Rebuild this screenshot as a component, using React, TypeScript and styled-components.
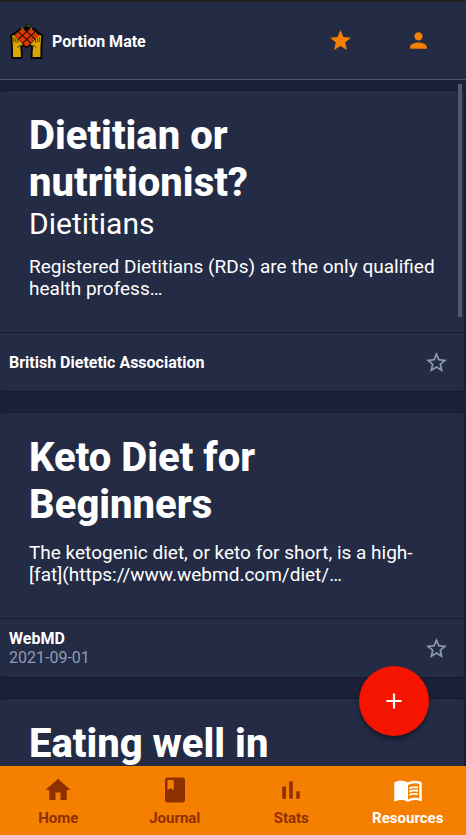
import React from "react";
import styled, { createGlobalStyle } from "styled-components";
import {
  MdAdd,
  MdBook,
  MdHome,
  MdMenuBook,
  MdPerson,
  MdStar,
  MdStarBorder,
} from "react-icons/md";

const color = {
  page: "#1c2039",
  surface: "#242b45",
  edge: "#151a30",
  rule: "#4b5269",
  text: "#ffffff",
  hint: "#8f9bb3",
  accent: "#f57f00",
  accentDark: "#8f3000",
  danger: "#f51400",
};

const GlobalStyle = createGlobalStyle`
  * { box-sizing: border-box; }
  body {
    margin: 0;
    background: ${color.page};
    color: ${color.text};
    font-family: Roboto, "Liberation Sans", sans-serif;
  }
  button { font: inherit; border: 0; padding: 0; background: none; cursor: pointer; }
`;

const Screen = styled.div`
  position: relative;
  display: flex;
  flex-direction: column;
  height: 100vh;
  overflow: hidden;
`;

const Header = styled.header`
  flex: none;
  display: flex;
  align-items: center;
  height: 80px;
  padding: 0 9px;
  background: ${color.surface};
  border-top: 2px solid #222222;
  border-bottom: 1px solid ${color.rule};
`;

const Brand = styled.h1`
  flex: 1;
  display: flex;
  align-items: center;
  gap: 7px;
  margin: 0;
  padding-top: 2px;
  font-size: 16px;
  line-height: 20px;
  font-weight: 700;
`;

const HeaderActions = styled.div`
  display: flex;
`;

const HeaderButton = styled.button`
  display: flex;
  align-items: center;
  justify-content: center;
  width: 78px;
  height: 48px;
  color: ${color.accent};
`;

const Feed = styled.main`
  position: relative;
  flex: 1;
  min-height: 0;
  overflow: hidden;
  display: flex;
  flex-direction: column;
  gap: 20px;
  padding: 10px 1px 0 0;
`;

const ScrollThumb = styled.div`
  position: absolute;
  top: 4px;
  right: 4px;
  width: 4px;
  height: 233px;
  background: #53576a;
`;

const Card = styled.article`
  flex: none;
  background: ${color.surface};
  border: 1px solid ${color.edge};
  border-left-width: 0;
  border-radius: 4px;
`;

const CardBody = styled.div`
  padding: 21px 20px 18px 29px;
`;

const Title = styled.h2`
  max-width: 300px;
  margin: 0;
  font-size: 40px;
  line-height: 47px;
  font-weight: 800;
`;

const Subtitle = styled.p`
  margin: 0;
  font-size: 30px;
  line-height: 36px;
`;

const Excerpt = styled.p`
  margin: 14px 0;
  font-size: 19px;
  line-height: 22px;
`;

const CardFooter = styled.footer`
  display: flex;
  align-items: center;
  justify-content: space-between;
  min-height: 59px;
  padding: 0 15px 0 9px;
  border-top: 1px solid ${color.edge};
`;

const Source = styled.div`
  font-size: 16px;
  line-height: 19px;
  font-weight: 700;
`;

const PublishDate = styled.time`
  display: block;
  font-weight: 400;
  color: ${color.hint};
`;

const FavouriteButton = styled.button`
  display: flex;
  color: ${color.hint};
`;

const AddButton = styled.button`
  position: absolute;
  right: 37px;
  bottom: 99px;
  display: flex;
  align-items: center;
  justify-content: center;
  width: 70px;
  height: 70px;
  border-radius: 50%;
  background: ${color.danger};
  color: ${color.text};
  box-shadow: 0 3px 5px rgba(0, 0, 0, 0.45);
`;

const TabBar = styled.nav`
  flex: none;
  display: grid;
  grid-template-columns: repeat(4, 1fr);
  height: 69px;
  background: ${color.accent};
`;

const Tab = styled.button<{ $active: boolean }>`
  display: flex;
  flex-direction: column;
  align-items: center;
  justify-content: center;
  gap: 4px;
  font-size: 15px;
  line-height: 18px;
  font-weight: 700;
  color: ${(p) => (p.$active ? color.text : color.accentDark)};
`;

const tiles = [
  [13.4, 8.6],
  [22, 8.6],
  [9, 12.4],
  [17.7, 12.4],
  [26.4, 12.4],
  [13.4, 16.4],
  [22, 16.4],
  [17.7, 20.4],
];

function Hand() {
  return (
    <>
      <path
        d="M2.2 12.5 4.6 10.4 9 14l6.3 6-.8 2.2-2.3 1.6.6 5.4V35H3V25.5Z"
        fill="#dca600"
        stroke="#090909"
        strokeWidth="2"
        strokeLinejoin="round"
      />
      <path d="M4.8 14v5M6.8 15v4.5M8.8 16v4M8 24.5l4-2.5" fill="none" stroke="#5c4300" strokeWidth="1" />
    </>
  );
}

function Logo() {
  return (
    <svg width="36" height="38" viewBox="0 0 36 38" aria-hidden="true">
      <path d="M3.5 11 10 5.5 16 4l4-2 3 2.5 3.5 1L32 11l-8 9-6.3 6-6.3-6Z" fill="#090909" />
      <Hand />
      <g transform="translate(35.4 0) scale(-1 1)">
        <Hand />
      </g>
      <path d="M5 12 13 5.5 17.7 8l4.7-2.5 8 6.5-12.7 13Z" fill="#160b08" />
      {tiles.map(([x, y]) => (
        <path key={`${x}-${y}`} d={`M${x} ${y - 3.3}l3.5 3.3-3.5 3.3-3.5-3.3z`} fill="#dc3a00" />
      ))}
      <path d="m12.5 4.5 2 2M23 4.5l-2 2" stroke="#b95a16" strokeWidth="1.4" />
      <path d="M17 2.5h4.5" stroke="#141d0d" strokeWidth="3" />
      <path d="M18.5 2.8h2.5" stroke="#3c7a1c" strokeWidth="1.4" />
    </svg>
  );
}

interface IconProps {
  size: number;
}

function BarsIcon({ size }: IconProps) {
  return (
    <svg width={size} height={size} viewBox="0 0 24 24" fill="currentColor" aria-hidden="true">
      <path d="M5 9.2h3V19H5zM10.6 5h2.8v14h-2.8zm5.6 8H19v6h-2.8z" />
    </svg>
  );
}

interface Resource {
  title: string;
  subtitle?: string;
  excerpt?: string;
  source?: string;
  date?: string;
}

const resources: Resource[] = [
  {
    title: "Dietitian or nutritionist?",
    subtitle: "Dietitians",
    excerpt: "Registered Dietitians (RDs) are the only qualified health profess…",
    source: "British Dietetic Association",
  },
  {
    title: "Keto Diet for Beginners",
    excerpt: "The ketogenic diet, or keto for short, is a high-[fat](https://www.webmd.com/diet/…",
    source: "WebMD",
    date: "2021-09-01",
  },
  { title: "Eating well in" },
];

const tabs: { label: string; Icon: React.ComponentType<IconProps> }[] = [
  { label: "Home", Icon: MdHome },
  { label: "Journal", Icon: MdBook },
  { label: "Stats", Icon: BarsIcon },
  { label: "Resources", Icon: MdMenuBook },
];

function ResourceCard({ title, subtitle, excerpt, source, date }: Resource) {
  return (
    <Card>
      <CardBody>
        <Title>{title}</Title>
        {subtitle && <Subtitle>{subtitle}</Subtitle>}
        {excerpt && <Excerpt>{excerpt}</Excerpt>}
      </CardBody>
      {source && (
        <CardFooter>
          <Source>
            {source}
            {date && <PublishDate dateTime={date}>{date}</PublishDate>}
          </Source>
          <FavouriteButton type="button" aria-label={`Save ${title}`}>
            <MdStarBorder size={25} />
          </FavouriteButton>
        </CardFooter>
      )}
    </Card>
  );
}

export default function App() {
  return (
    <Screen>
      <GlobalStyle />
      <Header>
        <Brand>
          <Logo />
          Portion Mate
        </Brand>
        <HeaderActions>
          <HeaderButton type="button" aria-label="Favourites">
            <MdStar size={25} />
          </HeaderButton>
          <HeaderButton type="button" aria-label="Profile">
            <MdPerson size={25} />
          </HeaderButton>
        </HeaderActions>
      </Header>
      <Feed>
        {resources.map((r) => (
          <ResourceCard key={r.title} {...r} />
        ))}
        <ScrollThumb />
      </Feed>
      <TabBar>
        {tabs.map(({ label, Icon }) => (
          <Tab key={label} type="button" $active={label === "Resources"}>
            <Icon size={30} />
            {label}
          </Tab>
        ))}
      </TabBar>
      <AddButton type="button" aria-label="Add resource">
        <MdAdd size={26} />
      </AddButton>
    </Screen>
  );
}
